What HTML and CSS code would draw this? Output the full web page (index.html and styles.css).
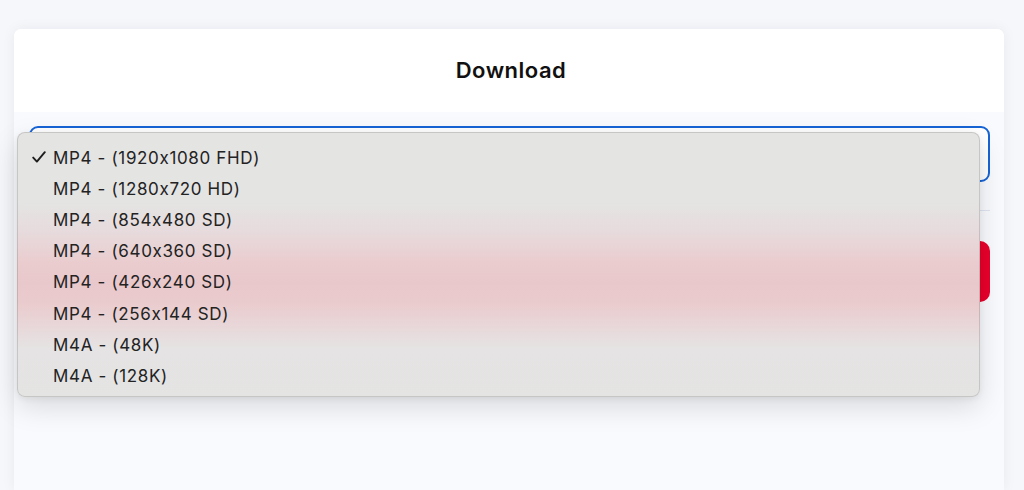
FILE: index.html
```html
<!DOCTYPE html>
<html lang="en">
<head>
<meta charset="utf-8">
<title>Download</title>
<link rel="stylesheet" href="styles.css">
</head>
<body>
<div class="page">
  <div class="card">
    <div class="card-head">
      <h1 class="title">Download</h1>
    </div>
    <div class="card-body">
      <div class="select-box"></div>
      <div class="divider"></div>
      <div class="download-btn"></div>
    </div>
  </div>
  <ul class="menu">
    <li class="item selected"><span class="check"><svg class="check-icon" width="14" height="12" viewBox="0 0 14 12"><path d="M1.2 6.6 L4.9 10.6 L12.8 1.2" fill="none" stroke="#1e1e1e" stroke-width="1.9" stroke-linecap="round" stroke-linejoin="round"/></svg></span>MP4 - (1920x1080 FHD)</li>
    <li class="item"><span class="check"></span>MP4 - (1280x720 HD)</li>
    <li class="item"><span class="check"></span>MP4 - (854x480 SD)</li>
    <li class="item"><span class="check"></span>MP4 - (640x360 SD)</li>
    <li class="item"><span class="check"></span>MP4 - (426x240 SD)</li>
    <li class="item"><span class="check"></span>MP4 - (256x144 SD)</li>
    <li class="item"><span class="check"></span>M4A - (48K)</li>
    <li class="item"><span class="check"></span>M4A - (128K)</li>
  </ul>
</div>
</body>
</html>
```
FILE: styles.css
```css
html, body {
  margin: 0;
  padding: 0;
  height: 100%;
  overflow: hidden;
}
body {
  background: #f6f7fa;
  font-family: "Inter", "Liberation Sans", sans-serif;
}
.page {
  position: relative;
  padding: 29px 20px 0 14px;
  height: 100%;
  box-sizing: border-box;
}
.card {
  width: 990px;
  height: 100%;
  background: #f9fafd;
  border-radius: 7px 7px 0 0;
  box-shadow: 0 0 14px rgba(30, 40, 80, 0.06);
  overflow: hidden;
}
.card-head {
  height: 83px;
  background: #ffffff;
  display: flex;
  align-items: center;
  justify-content: center;
}
.title {
  margin: 0 0 2px;
  font-family: "Inter", "Liberation Sans", sans-serif;
  font-size: 22px;
  font-weight: 600;
  color: #111;
  letter-spacing: 0.5px;
  padding-left: 4px;
}
.card-body {
  padding: 14px 14px 0 15px;
}
.select-box {
  height: 52px;
  border: 2px solid #1764d6;
  border-radius: 9px;
  background: #fff;
}
.divider {
  margin-top: 28px;
  height: 1px;
  background: #dfe5f0;
}
.download-btn {
  margin-top: 30px;
  height: 61px;
  border-radius: 10px;
  background: #e9002b;
}
.menu {
  position: absolute;
  left: 17px;
  top: 132px;
  width: 963px;
  height: 265px;
  box-sizing: border-box;
  margin: 0;
  padding: 9px 0 0 14px;
  list-style: none;
  border: 1px solid rgba(0, 0, 0, 0.13);
  border-radius: 8px;
  background: linear-gradient(to bottom,
    #e4e4e3 0px,
    #e4e4e3 70px,
    #e7dadc 100px,
    #eaccce 130px,
    #e9c8cb 150px,
    #eacbcd 170px,
    #e8d8da 195px,
    #e5e3e3 215px,
    #e4e4e3 265px);
  box-shadow: 0 10px 28px rgba(0, 0, 0, 0.13), 0 2px 6px rgba(0, 0, 0, 0.06);
}
.item {
  display: flex;
  align-items: center;
  height: 31.2px;
  font-size: 17px;
  color: #232323;
  letter-spacing: 0.65px;
  white-space: nowrap;
}
.check {
  display: flex;
  align-items: center;
  width: 21px;
  height: 100%;
}
.check-icon {
  display: block;
  margin-bottom: 1px;
}
```
